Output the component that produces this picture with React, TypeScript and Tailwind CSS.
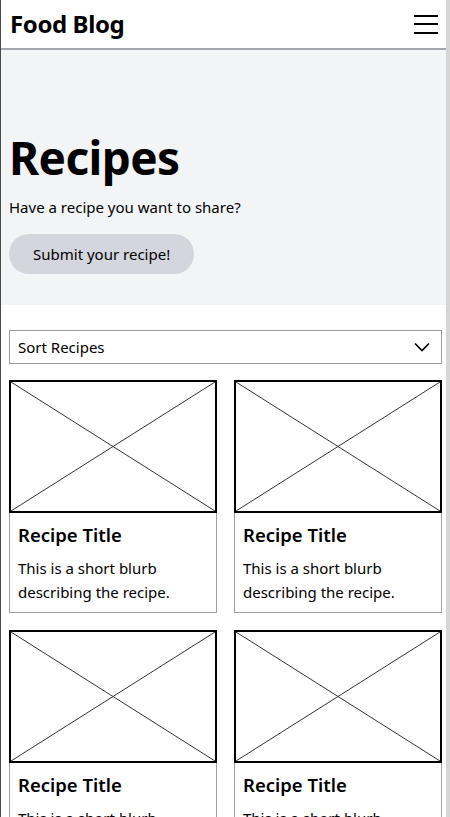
import { useState } from "react";

type Recipe = { id: number; title: string; blurb: string };

const recipes: Recipe[] = [
  { id: 1, title: "Recipe Title", blurb: "This is a short blurb describing the recipe." },
  { id: 2, title: "Recipe Title", blurb: "This is a short blurb describing the recipe." },
  { id: 3, title: "Recipe Title", blurb: "This is a short blurb describing the recipe." },
  { id: 4, title: "Recipe Title", blurb: "This is a short blurb describing the recipe." },
];

function Placeholder() {
  return (
    <div className="h-[133px] border-2 border-black bg-white">
      <svg width="100%" height="100%" preserveAspectRatio="none" viewBox="0 0 100 100">
        <line x1="0" y1="0" x2="100" y2="100" stroke="#333" strokeWidth="1" vectorEffect="non-scaling-stroke" />
        <line x1="100" y1="0" x2="0" y2="100" stroke="#333" strokeWidth="1" vectorEffect="non-scaling-stroke" />
      </svg>
    </div>
  );
}

export default function App() {
  const [sort, setSort] = useState("");

  return (
    <div
      className="flex min-h-[817px] bg-white text-black"
      style={{ fontFamily: '"Noto Sans", "Open Sans", sans-serif' }}
    >
      <div className="w-px shrink-0 bg-[#4a4a4a]" />
      <div className="flex-1 min-w-0">
        <header className="h-[50px] flex items-center justify-between pl-[9px] pr-[8px] border-b-2 border-[#a3a7ad]">
          <span className="text-[24px] font-bold leading-none tracking-[-0.4px]">Food Blog</span>
          <button className="flex flex-col gap-[6.5px] w-[24px]" aria-label="Menu">
            <span className="h-[2px] bg-black" />
            <span className="h-[2px] bg-black" />
            <span className="h-[2px] bg-black" />
          </button>
        </header>

        <section className="bg-[#f3f4f6] h-[255px] pl-[8px] pt-[79px]">
          <h1 className="text-[46px] font-bold leading-[56px] tracking-[-0.6px]">Recipes</h1>
          <p className="text-[15px] leading-[24px] mt-[10px]">Have a recipe you want to share?</p>
          <button className="mt-[15px] h-[40px] px-[24px] rounded-full bg-[#d5d6dd] text-[15px]">
            Submit your recipe!
          </button>
        </section>

        <main className="pl-[8px] pr-[4px] pt-[25px]">
          <div className="relative h-[34px] border border-[#9a9a9a] bg-white">
            <select
              value={sort}
              onChange={(e) => setSort(e.target.value)}
              className="w-full h-full appearance-none bg-transparent pl-[8px] text-[15px] outline-none"
            >
              <option value="">Sort Recipes</option>
              <option value="new">Newest</option>
              <option value="old">Oldest</option>
            </select>
            <svg
              className="absolute right-[11px] top-[11px] pointer-events-none"
              width="16" height="10" viewBox="0 0 16 10" fill="none" stroke="black" strokeWidth="1.6"
            >
              <path d="M1 1.5 L8 8.5 L15 1.5" />
            </svg>
          </div>

          <div className="grid grid-cols-2 gap-x-[17px] gap-y-[17px] mt-[16px]">
            {recipes.map((r) => (
              <div key={r.id} className="border border-[#a0a0a0] bg-white">
                <div className="-m-px">
                  <Placeholder />
                </div>
                <div className="px-[8px] pt-[10px] pb-[8px]">
                  <h2 className="text-[18.5px] font-semibold leading-[26px]">{r.title}</h2>
                  <p className="text-[15px] leading-[24px] mt-[8px]">{r.blurb}</p>
                </div>
              </div>
            ))}
          </div>
        </main>
      </div>
      <div className="w-[4px] shrink-0 bg-[#d6d6d6]" />
    </div>
  );
}
